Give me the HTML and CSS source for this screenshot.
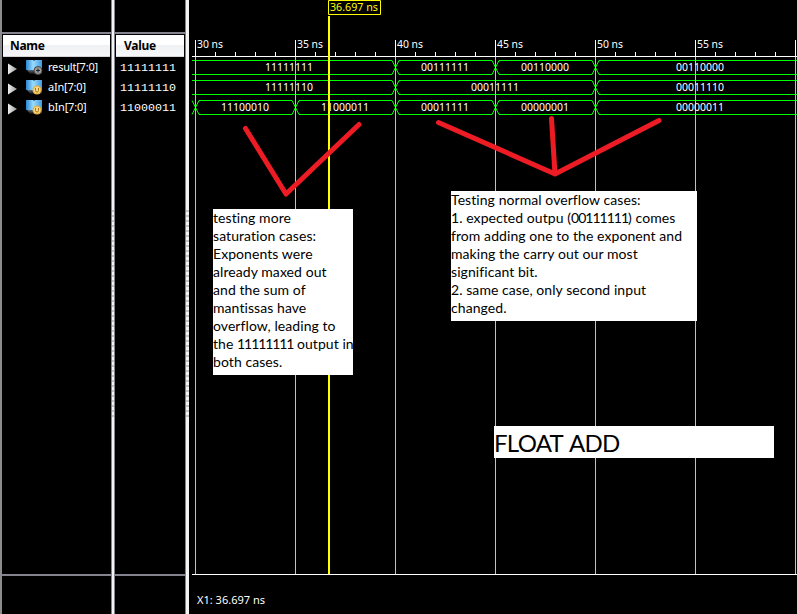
FILE: index.html
```
<!DOCTYPE html>
<html lang="en">
<head>
<meta charset="utf-8">
<title>Waveform - float add</title>
<link rel="stylesheet" href="styles.css">
</head>
<body>
<svg width="0" height="0" class="defs">
  <defs>
    <linearGradient id="blue" x1="0" y1="0" x2="1" y2="0"><stop offset="0" stop-color="#2a86cf"/><stop offset=".45" stop-color="#9bdcff"/><stop offset="1" stop-color="#3f9be0"/></linearGradient>
    <linearGradient id="shade" x1="0" y1="0" x2="0" y2="1"><stop offset="0" stop-color="#5a6c7c"/><stop offset="1" stop-color="#0a0d10"/></linearGradient>
    <linearGradient id="tri" x1="0" y1="0" x2="1" y2="0"><stop offset="0" stop-color="#f0f0f0"/><stop offset="1" stop-color="#9a9a9a"/></linearGradient>
    <g id="bus">
      <path d="M0 0h16v10H0z" fill="url(#blue)"/>
      <path d="M7 0h2l-1 1z" fill="#16405f"/>
      <path d="M1 10h15v4H4z" fill="url(#shade)"/>
    </g>
    <g id="var">
      <circle cx="11" cy="10" r="4.500" fill="#e8b040"/>
      <circle cx="11" cy="10" r="3.300" fill="#f6d98a"/>
      <path d="M9.500 8v2.500q0 1.500 1.500 1.500t1.500-1.500V8" stroke="#a8700c" fill="none"/>
    </g>
  </defs>
</svg>
<main class="viewer">
  <section class="panel names">
    <div class="top"></div>
    <h2>Name</h2>
    <ul>
      <li><svg class="tri" width="9" height="12"><path d="M0 0.500L9 6L0 11.500z" fill="url(#tri)"/></svg><svg class="ico" width="17" height="17"><use href="#bus"/><circle cx="12" cy="10.500" r="4" fill="#9c9c9c" stroke="#444"/><path d="M10 10.500h4M12 8.500v4" stroke="#222"/></svg><span>result[7:0]</span></li>
      <li><svg class="tri" width="9" height="12"><path d="M0 0.500L9 6L0 11.500z" fill="url(#tri)"/></svg><svg class="ico" width="17" height="17"><use href="#bus"/><use href="#var"/></svg><span>aIn[7:0]</span></li>
      <li><svg class="tri" width="9" height="12"><path d="M0 0.500L9 6L0 11.500z" fill="url(#tri)"/></svg><svg class="ico" width="17" height="17"><use href="#bus"/><use href="#var"/></svg><span>bIn[7:0]</span></li>
    </ul>
    <div class="foot"></div>
  </section>
  <div class="split"><i></i></div>
  <section class="panel values">
    <div class="top"></div>
    <h2>Value</h2>
    <ul><li>11111111</li><li>11111110</li><li>11000011</li></ul>
    <div class="foot"></div>
  </section>
  <div class="split wide"><i></i></div>
  <section class="wave">
    <svg class="plot" width="608" height="614" viewBox="189 0 608 614">
      <g class="ruler" id="ruler"></g>
      <g class="bus" id="signals"></g>
      <g class="grid" id="grid"></g>
      <g class="label" id="labels"></g>
      <path d="M328 16h2v558h-2z" fill="#ff0"/>
      <path d="M328.500 .5h52v14h-52z" fill="#000" stroke="#ff0"/>
      <text class="cursor" x="330" y="11" textLength="48" lengthAdjust="spacingAndGlyphs">36.697 ns</text>
      <text class="label" x="197" y="604" textLength="68" lengthAdjust="spacingAndGlyphs">X1: 36.697 ns</text>
      <path class="pen" d="M245.500 128.500L286 194L359 124.500M438.500 122.500L555 174L659 120.500M551.500 118.500L555 174"/>
    </svg>
    <div class="note one"><p>testing more</p><p>saturation cases:</p><p>Exponents were</p><p>already maxed out</p><p>and the sum of</p><p>mantissas have</p><p>overflow, leading to</p><p>the <b>11111111</b> output in</p><p>both cases.</p></div>
    <div class="note two"><p>Testing normal overflow cases:</p><p>1. expected outpu (<b class="loose">00111111</b>) comes</p><p>from adding one to the exponent and</p><p>making the carry out our most</p><p>significant bit.</p><p>2. same case, only second input</p><p>changed.</p></div>
    <div class="note title">FLOAT ADD</div>
  </section>
</main>
<script src="wave.js"></script>
</body>
</html>
```
FILE: styles.css
```
* { box-sizing: border-box; }
body { margin: 0; background: #000; color: #fff; font: 11px/20px "Noto Sans", sans-serif; overflow: hidden; }
.defs { position: absolute; }
.viewer { display: grid; grid-template-columns: 111px 4px 70px 4px 608px; height: 614px; }
.panel { display: flex; flex-direction: column; }
.names { border-left: 2px solid #8c8c90; }
.top { height: 34px; border-bottom: 2px solid #84848e; }
h2 { margin: 1px 1px 0; height: 22px; padding-left: 7px; font: bold 12px/21px "Noto Sans", sans-serif; letter-spacing: -.3px; color: #000; background: linear-gradient(#fff 45%, #f0f1f3 50%, #f6f7f8); border-bottom: 1px solid #d5d5d5; }
.values h2 { padding-left: 8px; }
ul { list-style: none; margin: 0; padding: 0; flex: 1; }
li { display: flex; height: 20px; align-items: center; }
.tri { margin: 4px 9px 0 6px; }
.ico { margin-right: 5px; margin-top: 3px; }
.names span { letter-spacing: -.2px; }
.values li { padding: 1px 0 0 5px; font-family: "Liberation Mono", monospace; font-size: 11.67px; }
.foot { height: 40px; border-top: 2px solid #84848e; }
.split { background: #f4f4f4; border: solid #84848e; border-width: 0 1px; padding-top: 210px; }
.split.wide { border-right: 0; }
.split i { display: block; height: 208px; background: repeating-linear-gradient(#c4c4c4 0 2px, #f4f4f4 2px 5px); }
.wave { position: relative; }
.plot { display: block; }
.ruler path { stroke: #fff; fill: none; }
.grid path { stroke: #c0c0c0; fill: none; }
.bus path { stroke: #0f0; fill: none; }
.label { fill: #fff; font: 11px "Noto Sans", sans-serif; }
.cursor { fill: #ff0; font: 11px "Noto Sans", sans-serif; }
.pen { stroke: #ed1c24; stroke-width: 5; stroke-linecap: round; stroke-linejoin: round; fill: none; }
.note { position: absolute; background: #fff; color: #000; font: 14px/18px Lato, sans-serif; letter-spacing: .07px; white-space: nowrap; }
.note p { margin: 0; }
.note b { font-weight: normal; letter-spacing: -1.1px; }
.note .loose { letter-spacing: -1px; }
.one { left: 24px; top: 209px; width: 140px; height: 166px; }
.two { left: 262px; top: 191px; width: 246px; height: 130px; }
.title { left: 305px; top: 426px; width: 280px; height: 32px; font-size: 24px; line-height: 34px; letter-spacing: -.7px; word-spacing: 2px; }
```
FILE: wave.js
```
const START = 195, STEP = 100;
const signals = [
  { y: 67, edges: [395, 495, 595], values: ["11111111", "00111111", "00110000", "00110000"], at: [289, 445, 545, 700] },
  { y: 87, edges: [395, 595], values: ["11111110", "00011111", "00011110"], at: [289, 495, 700] },
  { y: 107, edges: [195, 295, 395, 495, 595], values: ["", "11100010", "11000011", "00011111", "00000001", "00000011"], at: [0, 245, 345, 445, 545, 700] }
];
const text = (x, y, w, s) => `<text x="${x}" y="${y}" textLength="${w}" lengthAdjust="spacingAndGlyphs">${s}</text>`;
let ruler = "M192 56.500H797M192 574.500H797", grid = "", bus = "", labels = "";
for (let i = 0; i < 7; i++) {
  const x = START + i * STEP + 0.5;
  ruler += `M${x} 40V57`;
  grid += `M${x} 57V574`;
  for (let k = 1; k < 5; k++) ruler += `M${x + k * 20} 52V57`;
  if (i < 6) labels += text(x + 1.5, 48, 26, `${30 + i * 5} ns`);
}
for (const s of signals) {
  const top = s.y - 6.5, bottom = s.y + 7.5;
  let from = 192;
  for (const e of [...s.edges, 900]) {
    const end = e === 900 ? 797 : e - 3;
    if (end > from) bus += `M${from} ${top}H${end}M${from} ${bottom}H${end}`;
    if (e !== 900) bus += `M${e - 3} ${top}L${e + 4} ${bottom}M${e - 3} ${bottom}L${e + 4} ${top}`;
    from = e + 4;
  }
  s.values.forEach((v, i) => { if (v) labels += text(s.at[i] - 24, s.y + 4, 48, v); });
}
document.getElementById("ruler").innerHTML = `<path d="${ruler}"/>`;
document.getElementById("grid").innerHTML = `<path d="${grid}"/>`;
document.getElementById("signals").innerHTML = `<path d="${bus}"/>`;
document.getElementById("labels").innerHTML = labels;
```
